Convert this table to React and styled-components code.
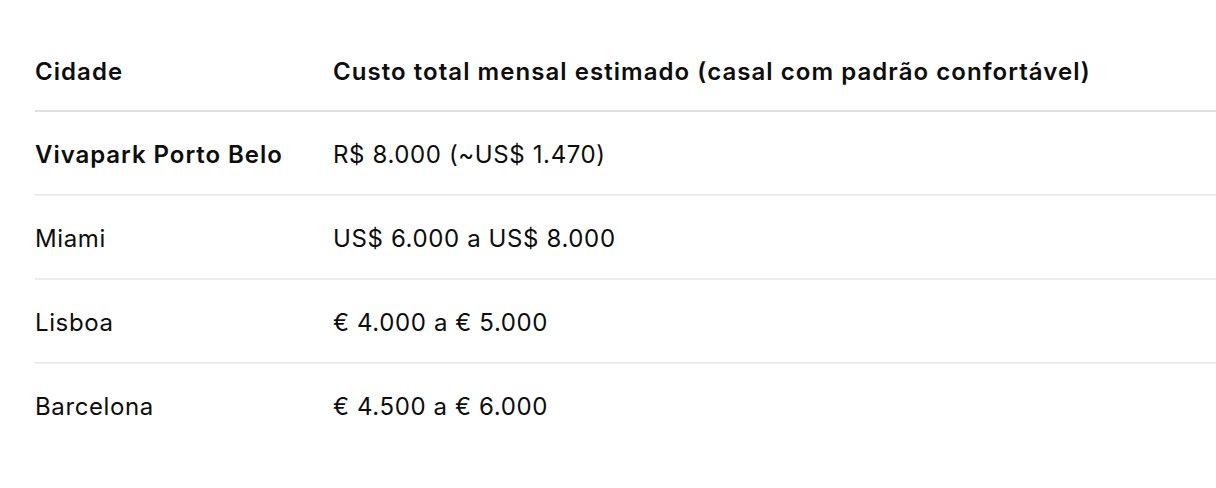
import React from "react";
import styled, { createGlobalStyle } from "styled-components";

const GlobalStyle = createGlobalStyle`
  html, body {
    margin: 0;
    padding: 0;
    background: #ffffff;
  }
  body {
    font-family: Inter, "Noto Sans", "Liberation Sans", sans-serif;
    color: #0d0d0d;
    overflow: hidden;
  }
`;

const Wrapper = styled.div`
  width: 1216px;
  height: 488px;
  padding: 29px 0 0 35px;
  box-sizing: border-box;
  overflow: hidden;
`;

const Table = styled.table`
  border-collapse: collapse;
  width: 1181px;
  font-size: 24px;
  line-height: 32px;
`;

const HeadCell = styled.th`
  text-align: left;
  font-weight: 600;
  letter-spacing: 1.05px;
  height: 82px;
  padding: 4px 0 0;
  box-sizing: border-box;
  vertical-align: middle;
  border-bottom: 2px solid #e0e0e0;
  width: ${(p) => p.$w || "auto"};
`;

const Row = styled.tr`
  & + & td {
    border-top: 2px solid #ececec;
  }
`;

const Cell = styled.td`
  height: 78px;
  padding: 4px 0 0;
  vertical-align: middle;
  font-weight: ${(p) => (p.$bold ? 600 : 400)};
  letter-spacing: ${(p) => (p.$bold ? "0.95px" : "0.62px")};
`;

const rows = [
  { city: "Vivapark Porto Belo", cost: "R$ 8.000 (~US$ 1.470)", bold: true },
  { city: "Miami", cost: "US$ 6.000 a US$ 8.000" },
  { city: "Lisboa", cost: "€ 4.000 a € 5.000" },
  { city: "Barcelona", cost: "€ 4.500 a € 6.000" },
];

export default function App() {
  return (
    <>
      <GlobalStyle />
      <Wrapper>
        <Table>
          <thead>
            <tr>
              <HeadCell $w="298px">Cidade</HeadCell>
              <HeadCell>Custo total mensal estimado (casal com padrão confortável)</HeadCell>
            </tr>
          </thead>
          <tbody>
            {rows.map((r) => (
              <Row key={r.city}>
                <Cell $bold={r.bold}>{r.city}</Cell>
                <Cell>{r.cost}</Cell>
              </Row>
            ))}
          </tbody>
        </Table>
      </Wrapper>
    </>
  );
}
